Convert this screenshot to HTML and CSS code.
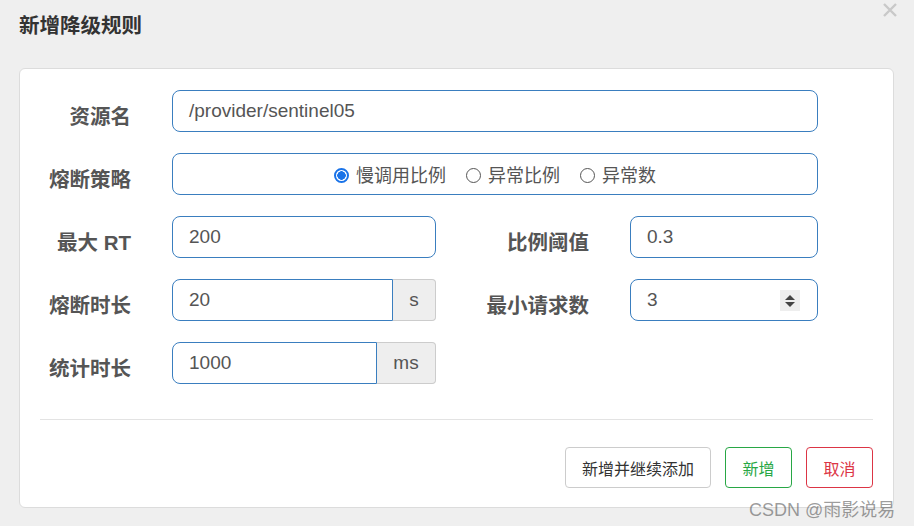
FILE: index.html
```html
<!DOCTYPE html>
<html lang="zh">
<head>
    <meta charset="UTF-8">
    <meta name="viewport" content="width=device-width, initial-scale=1.0">
    <title>新增降级规则</title>
    <link rel="stylesheet" href="styles.css">
</head>
<body>
    <div class="header">
        <h1>新增降级规则</h1>
        <svg class="close" width="14" height="14" viewBox="0 0 14 14"><path d="M1 1 L13 13 M13 1 L1 13" stroke="#c9c9c9" stroke-width="2.4"/></svg>
    </div>
    <div class="card">
        <div class="row">
            <label class="label">资源名</label>
            <div class="field wide">/provider/sentinel05</div>
        </div>
        <div class="row">
            <label class="label">熔断策略</label>
            <div class="field wide radios">
                <span class="radio"><i class="dot on"></i>慢调用比例</span>
                <span class="radio"><i class="dot"></i>异常比例</span>
                <span class="radio"><i class="dot"></i>异常数</span>
            </div>
        </div>
        <div class="row">
            <label class="label">最大 RT</label>
            <div class="field">200</div>
            <label class="label">比例阈值</label>
            <div class="field">0.3</div>
        </div>
        <div class="row">
            <label class="label">熔断时长</label>
            <div class="group">
                <div class="field in-group">20</div>
                <span class="addon s">s</span>
            </div>
            <label class="label">最小请求数</label>
            <div class="field number">3
                <span class="spin"><i class="up"></i><i class="down"></i></span>
            </div>
        </div>
        <div class="row">
            <label class="label">统计时长</label>
            <div class="group">
                <div class="field in-group">1000</div>
                <span class="addon ms">ms</span>
            </div>
        </div>
        <div class="line"></div>
        <div class="buttons">
            <button class="btn">新增并继续添加</button>
            <button class="btn ok">新增</button>
            <button class="btn cancel">取消</button>
        </div>
    </div>
    <div class="mark">CSDN @雨影说易</div>
</body>
</html>
```
FILE: styles.css
```css
*{
    margin: 0px;
    padding: 0px;
    box-sizing: border-box;
}
body{
    background: #efefef;
    font-family: "Liberation Sans", "Noto Sans CJK SC", sans-serif;
    color: #555;
    width: 914px;
    height: 526px;
    overflow: hidden;
    position: relative;
}
.header{
    display: flex;
    justify-content: space-between;
    height: 68px;
    padding: 13px 17px 0px 19px;
}
.header h1{
    font-size: 20.5px;
    font-weight: bold;
    color: #333;
    line-height: 26px;
}
.close{
    margin-top: -10px;
}
.card{
    margin-left: 19px;
    width: 875px;
    height: 440px;
    background: #fff;
    border: 1px solid #dcdcdc;
    border-radius: 6px;
    padding: 21px 20px 0px 20px;
}
.row{
    display: grid;
    grid-template-columns: 91px 264px 112px 188px;
    column-gap: 41px;
    align-items: center;
    height: 42px;
    margin-bottom: 21px;
}
.label{
    text-align: right;
    font-size: 20.5px;
    font-weight: bold;
    color: #555;
    white-space: nowrap;
    padding-top: 7px;
}
.field{
    height: 42px;
    border: 1px solid #3a7ebf;
    border-radius: 8px;
    padding: 0px 16px;
    font-size: 19px;
    line-height: 40px;
    color: #555;
    position: relative;
}
.wide{
    grid-column: 2 / 5;
}
.radios{
    display: flex;
    justify-content: center;
    gap: 20px;
    font-size: 18px;
    padding-top: 3px;
}
.radio{
    display: flex;
    align-items: center;
    gap: 7px;
}
.dot{
    width: 15px;
    height: 15px;
    border: 1px solid #555;
    border-radius: 50%;
    display: inline-block;
}
.dot.on{
    border: 2px solid #1a73e8;
    background: radial-gradient(circle, #1a73e8 0 4px, #fff 4.5px);
}
.group{
    display: flex;
    height: 42px;
}
.in-group{
    flex: 1;
    border-radius: 8px 0px 0px 8px;
}
.addon{
    background: #eee;
    border: 1px solid #ccc;
    border-left: none;
    border-radius: 0px 4px 4px 0px;
    font-size: 19px;
    line-height: 40px;
    text-align: center;
    color: #555;
}
.addon.s{
    width: 43px;
}
.addon.ms{
    width: 59px;
}
.spin{
    position: absolute;
    right: 17px;
    top: 10px;
    width: 20px;
    height: 21px;
    background: #eee;
    display: flex;
    flex-direction: column;
    align-items: center;
    justify-content: center;
    gap: 2px;
}
.up{
    border-left: 5px solid transparent;
    border-right: 5px solid transparent;
    border-bottom: 5px solid #444;
}
.down{
    border-left: 5px solid transparent;
    border-right: 5px solid transparent;
    border-top: 5px solid #444;
}
.line{
    border-top: 1px solid #e3e3e3;
    margin-top: 35px;
}
.buttons{
    display: flex;
    justify-content: flex-end;
    gap: 14px;
    margin-top: 27px;
}
.btn{
    height: 41px;
    padding: 0px 16px;
    background: #fff;
    border: 1px solid #ccc;
    border-radius: 4px;
    font-family: "Liberation Sans", "Noto Sans CJK SC", sans-serif;
    font-size: 16px;
    color: #333;
}
.btn.ok{
    border-color: #28a745;
    color: #28a745;
    width: 67px;
}
.btn.cancel{
    border-color: #dc3545;
    color: #dc3545;
    width: 67px;
}
.mark{
    position: absolute;
    left: 749px;
    top: 495px;
    font-size: 18px;
    color: rgba(90, 90, 90, 0.6);
    white-space: nowrap;
}
```
